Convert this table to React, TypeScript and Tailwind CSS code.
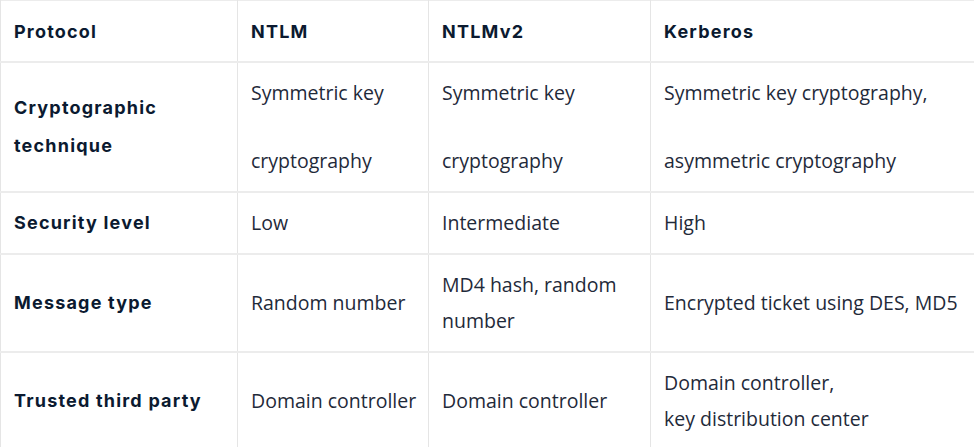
const headers = ["Protocol", "NTLM", "NTLMv2", "Kerberos"];

type Row = { label: string[]; cells: string[][]; split?: boolean };

const rows: Row[] = [
  {
    label: ["Cryptographic", "technique"],
    cells: [
      ["Symmetric key", "cryptography"],
      ["Symmetric key", "cryptography"],
      ["Symmetric key cryptography,", "asymmetric cryptography"],
    ],
    split: true,
  },
  { label: ["Security level"], cells: [["Low"], ["Intermediate"], ["High"]] },
  {
    label: ["Message type"],
    cells: [["Random number"], ["MD4 hash, random", "number"], ["Encrypted ticket using DES, MD5"]],
  },
  {
    label: ["Trusted third party"],
    cells: [["Domain controller"], ["Domain controller"], ["Domain controller,", "key distribution center"]],
  },
];

export default function App() {
  return (
    <div className="w-[974px] h-[447px] overflow-hidden bg-white">
      <table className="w-[974px] table-fixed border-collapse">
        <colgroup>
          <col className="w-[237px]" />
          <col className="w-[191px]" />
          <col className="w-[222px]" />
          <col className="w-[324px]" />
        </colgroup>
        <thead>
          <tr className="border-t border-b-2 border-[#ececec]">
            {headers.map((h) => (
              <th
                key={h}
                className="h-[61px] border-l border-[#e5e5e5] pl-[13px] pr-[6px] pt-[2px] text-left align-middle font-['Inter',sans-serif] text-[18px] font-bold leading-9 tracking-[1.2px] text-[#0b1a30]"
              >
                {h}
              </th>
            ))}
          </tr>
        </thead>
        <tbody>
          {rows.map((row, r) => (
            <tr key={r} className="border-b-2 border-[#ececec]">
              <td
                className={`border-l border-[#e5e5e5] pl-[13px] pr-[6px] py-[12px] align-middle font-['Inter',sans-serif] text-[18px] font-bold tracking-[1.2px] text-[#0b1a30] ${
                  row.split ? "leading-[38px]" : "leading-9"
                }`}
              >
                {row.label.map((l, k) => (
                  <div key={k}>{l}</div>
                ))}
              </td>
              {row.cells.map((c, i) => (
                <td
                  key={i}
                  className="border-l border-[#e5e5e5] pl-[13px] pr-[4px] py-[12px] align-middle font-['Open_Sans',sans-serif] text-[19.5px] leading-9 text-[#1f2a3a]"
                >
                  {c.map((line, k) => (
                    <div key={k} className={row.split && k > 0 ? "mt-[32px]" : ""}>
                      {line}
                    </div>
                  ))}
                </td>
              ))}
            </tr>
          ))}
        </tbody>
      </table>
    </div>
  );
}
